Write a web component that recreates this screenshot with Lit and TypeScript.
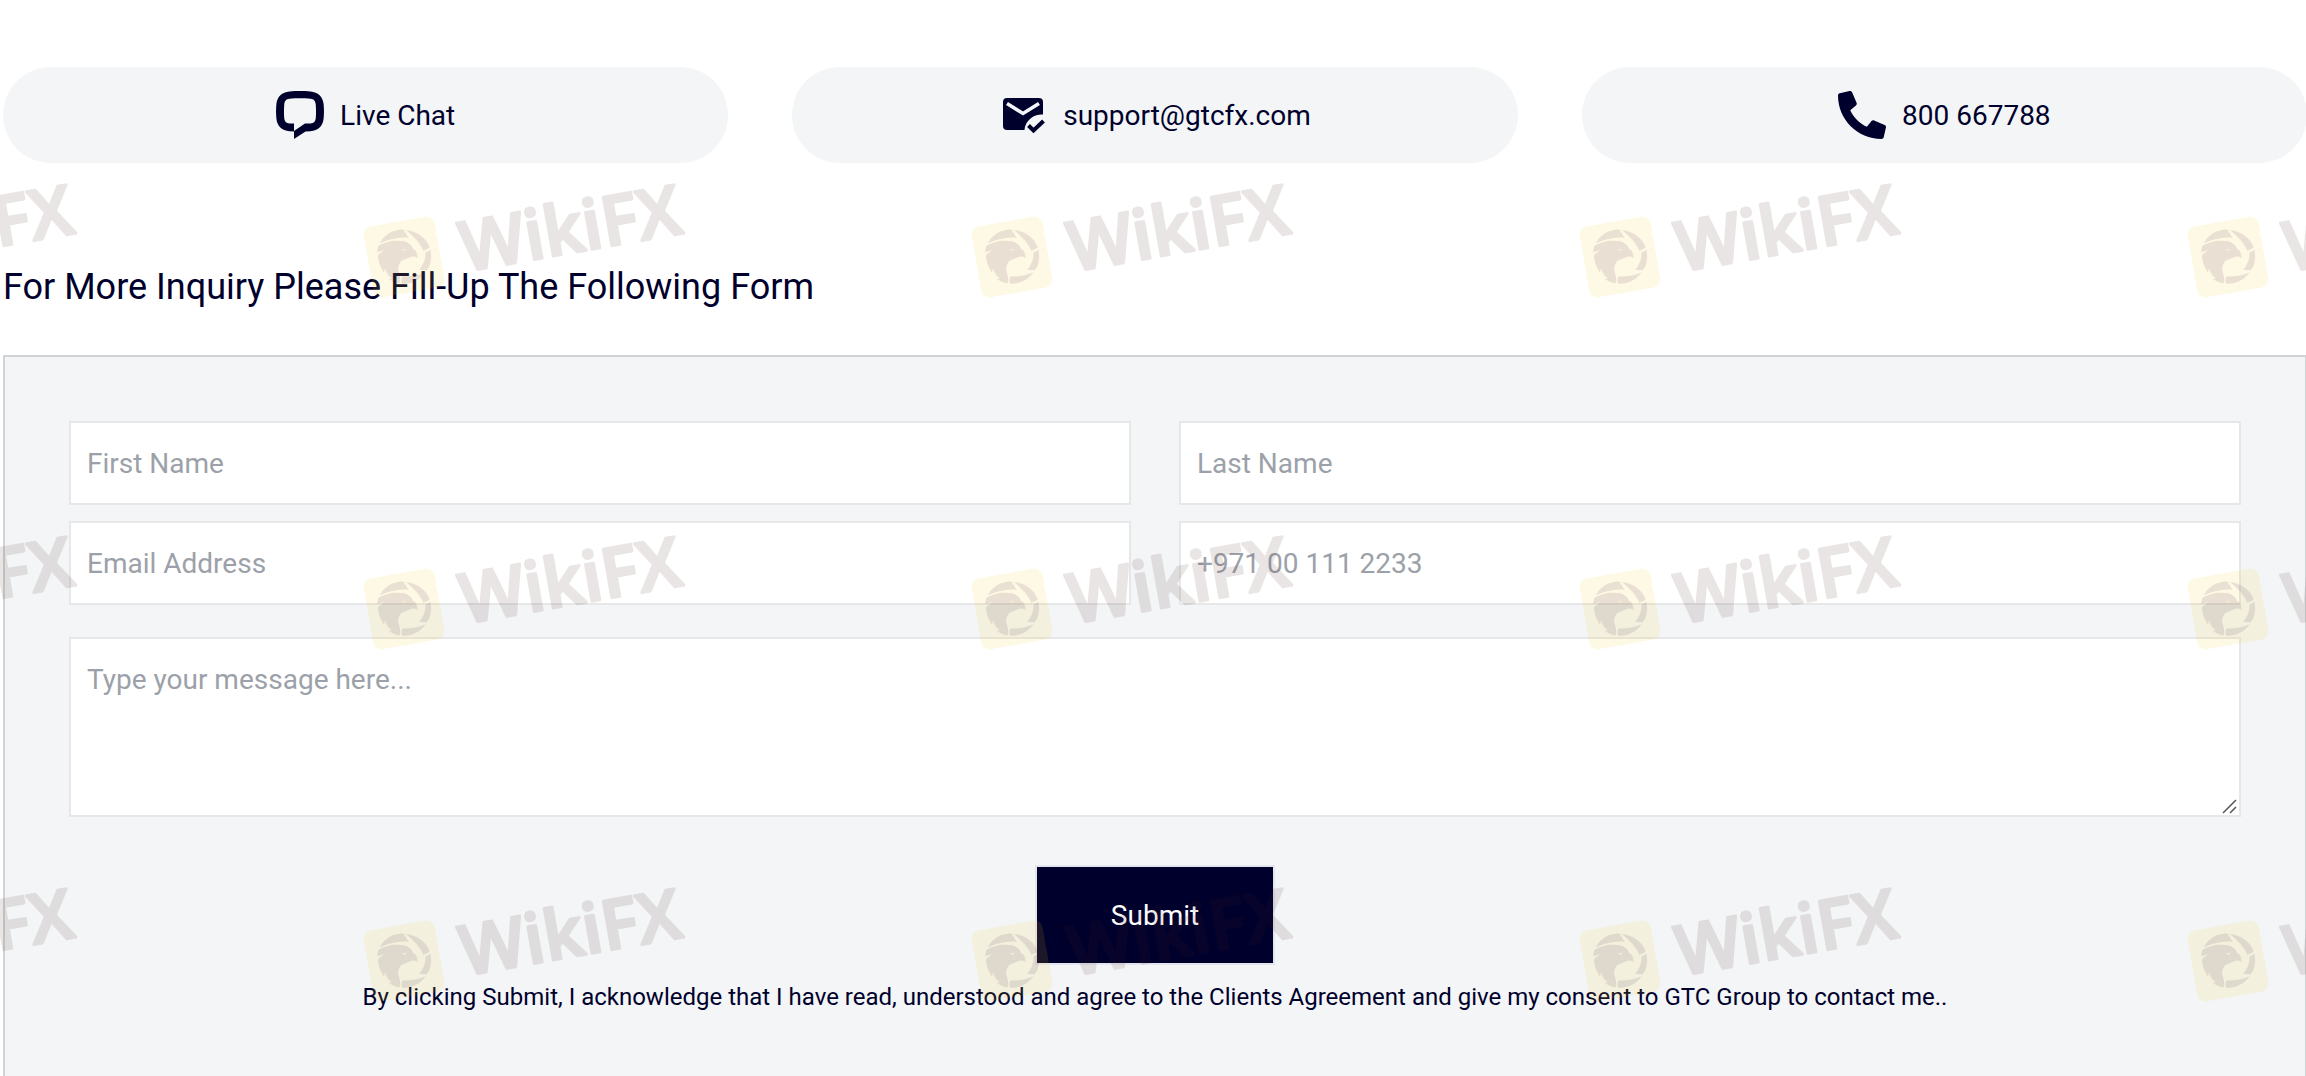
import { LitElement, html, css, svg } from "lit";
import { customElement } from "lit/decorators.js";

const chatIcon = html`<svg class="icon" viewBox="0 0 48 48" aria-hidden="true">
  <path fill="currentColor" fill-rule="evenodd" d="M13.500 0.500C20 -0.100 28 -0.100 34.500 0.500C42 1 47 6 47.600 13C48.100 18 48.100 23 47.600 27.500C47 35 42 39.600 34.500 40.200L29.500 40.400L18 48V40.400L13.500 40.200C6 39.600 1 35 0.400 27.500C-0.100 23 -0.100 18 0.400 13C1 6 6 1 13.500 0.500ZM13.500 7.800C10 8.200 8.600 10 8.200 14C7.900 18 7.900 23 8.200 27C8.500 30.500 10 32.300 13.500 32.600H18V40L29 32.600H34.500C38 32.300 39.500 30.500 39.800 27C40.100 23 40.100 18 39.800 14C39.400 10 38 8.200 34.500 7.800C28 7.200 20 7.200 13.500 7.800Z"/>
</svg>`;

const mailIcon = html`<svg class="icon" viewBox="0 0 48 48" aria-hidden="true">
  <path fill="currentColor" d="M8 7H40Q44 7 44 11V23.500A17 17 0 0 0 25.500 39H8Q4 39 4 35V11Q4 7 8 7Z"/>
  <path fill="none" stroke="#f3f5f7" stroke-width="3.600" d="M8 12.500L24 22.500L40 12.500"/>
  <path fill="none" stroke="currentColor" stroke-width="4" d="M29.500 34.500L34.500 39.500L44.500 30"/>
</svg>`;

const phoneIcon = html`<svg class="icon" viewBox="0 0 512 512" aria-hidden="true">
  <path fill="currentColor" d="M493.400 24.600l-104-24c-11.300-2.600-22.900 3.300-27.500 13.900l-48 112c-4.200 9.800-1.400 21.300 6.900 28l60.600 49.600c-36 76.700-98.900 140.500-177.200 177.200l-49.600-60.600c-6.800-8.300-18.200-11.100-28-6.900l-112 48C3.900 366.500-2 378.100.6 389.400l24 104C27.100 504.200 36.700 512 48 512c256.100 0 464-207.500 464-464 0-11.200-7.700-20.900-18.600-23.400z" transform="matrix(-1 0 0 1 512 0)"/>
</svg>`;

/* Brand stamp: a tilted tile with an eagle head inside shutter blades, then the name. */
const mark = () => svg`
  <rect x="-36" y="-36" width="72" height="72" rx="8" transform="rotate(-10)" fill="#f8c814" opacity="0.115"/>
  <g transform="scale(0.334)" fill="#4a2050" opacity="0.110">
    <path d="M-66 -52C-50 -72 -26 -83 -2 -82L14 -57C-14 -61 -42 -54 -72 -41Z"/>
    <path d="M6 -81C42 -76 68 -56 77 -28L58 -19C48 -42 28 -62 6 -81Z"/>
    <path d="M79 -22C84 4 80 26 68 40L46 39C60 20 66 2 64 -13Z"/>
    <path d="M64 46C48 70 22 82 -6 80C-10 70 -8 64 -2 58C22 60 46 54 64 46Z"/>
    <path d="M-77 -33C-58 -46 -28 -52 0 -47C14 -44 24 -35 26 -25C37 -21 41 -10 40 4C34 -2 28 -2 20 0C12 4 4 6 -4 10C-15 16 -20 32 -16 44C-13 56 -9 66 -14 79C-26 77 -38 71 -46 65L-36 64C-48 57 -54 46 -56 34L-60 46C-70 32 -78 12 -78 -6L-60 -20L-80 -14C-80 -21 -79 -27 -77 -33Z"/>
  </g>
  <path d="M-3 -8.500L3 -7.500L1 -6Z" fill="#fdf6da" opacity="0.700"/>
  <text class="mark-text" transform="rotate(-10)" x="57" y="25">WikiFX</text>`;

@customElement("app-root")
export class AppRoot extends LitElement {
  static styles = css`
    :host {
      display: block;
      position: relative;
      overflow: hidden;
      min-height: 100vh;
      background: #fff;
      color: #00002c;
      font: 28px/40px Roboto, "Liberation Sans", sans-serif;
    }
    * { box-sizing: border-box; }
    main {
      display: flex;
      flex-direction: column;
      min-height: 100vh;
      padding: 67px 0 0 3px;
      margin-right: -1px;
    }
    .contacts {
      display: grid;
      grid-template-columns: repeat(3, 1fr);
      gap: 64px;
    }
    .contact {
      display: flex;
      align-items: center;
      justify-content: center;
      gap: 16px;
      height: 96px;
      border-radius: 48px;
      background: #f3f5f7;
      color: inherit;
      text-decoration: none;
    }
    .contact span { line-height: 42px; padding-top: 2px; }
    .icon { width: 48px; height: 48px; flex: none; }
    h1 {
      margin: 96px 0 40px;
      font-size: 36px;
      line-height: 56px;
      font-weight: 400;
    }
    form {
      flex: 1;
      display: flex;
      flex-direction: column;
      padding: 64px;
      border: 2px solid #d0d4d6;
      border-bottom: 0;
      background: #f3f5f7;
    }
    .fields {
      display: grid;
      grid-template-columns: 1fr 1fr;
      gap: 16px 48px;
      margin-bottom: 32px;
    }
    .field {
      display: block;
      width: 100%;
      border: 2px solid #e5e7e9;
      border-radius: 0;
      outline: none;
      margin: 0;
      padding: 21px 16px 19px;
      background: #fff;
      color: inherit;
      font: inherit;
    }
    .field::placeholder { color: #9ca1a9; opacity: 1; }
    .message { position: relative; }
    textarea.field { height: 180px; resize: vertical; }
    textarea.field::-webkit-resizer { background: transparent; }
    .grip {
      position: absolute;
      right: 2px;
      bottom: 2px;
      width: 18px;
      height: 18px;
      pointer-events: none;
    }
    button {
      align-self: center;
      margin: 48px 0 12px;
      padding: 29px 72px 27px;
      border: 2px solid #e5e5ef;
      width: 240px;
      background: #00002c;
      color: #fff;
      font: inherit;
      cursor: pointer;
    }
    .consent {
      margin: 0;
      text-align: center;
      font-size: 24px;
      line-height: 40px;
    }
    .watermark {
      position: absolute;
      inset: 0;
      width: 100%;
      height: 100%;
      pointer-events: none;
    }
    .mark-text {
      font: 600 69px "Open Sans", "Noto Sans", sans-serif;
      fill: #4a2020;
      stroke: #4a2020;
      stroke-width: 3px;
      stroke-linejoin: round;
      opacity: 0.11;
    }
  `;

  render() {
    const columns = [-204, 404, 1012, 1620, 2228];
    const rows = [257, 609, 961];
    return html`
      <main>
        <nav class="contacts" aria-label="Contact">
          <a class="contact" href="#chat">${chatIcon}<span>Live Chat</span></a>
          <a class="contact" href="mailto:support@gtcfx.com">${mailIcon}<span>support@gtcfx.com</span></a>
          <a class="contact" href="tel:800667788">${phoneIcon}<span>800 667788</span></a>
        </nav>
        <h1>For More Inquiry Please Fill-Up The Following Form</h1>
        <form @submit=${(e: Event) => e.preventDefault()}>
          <div class="fields">
            <input class="field" type="text" aria-label="First Name" placeholder="First Name">
            <input class="field" type="text" aria-label="Last Name" placeholder="Last Name">
            <input class="field" type="email" aria-label="Email Address" placeholder="Email Address">
            <input class="field" type="tel" aria-label="Phone number" placeholder="+971 00 111 2233">
          </div>
          <div class="message">
            <textarea class="field" aria-label="Message" placeholder="Type your message here..."></textarea>
            <svg class="grip" viewBox="0 0 18 18" aria-hidden="true">
              <path d="M2 16L15 3M9 16L15 10" fill="none" stroke="#555" stroke-width="1.500"/>
            </svg>
          </div>
          <button type="submit">Submit</button>
          <p class="consent">By clicking Submit, I acknowledge that I have read, understood and agree to the Clients Agreement and give my consent to GTC Group to contact me..</p>
        </form>
      </main>
      <svg class="watermark" aria-hidden="true">
        ${rows.map((y) => columns.map((x) => svg`<g transform="translate(${x} ${y})">${mark()}</g>`))}
      </svg>
    `;
  }
}
